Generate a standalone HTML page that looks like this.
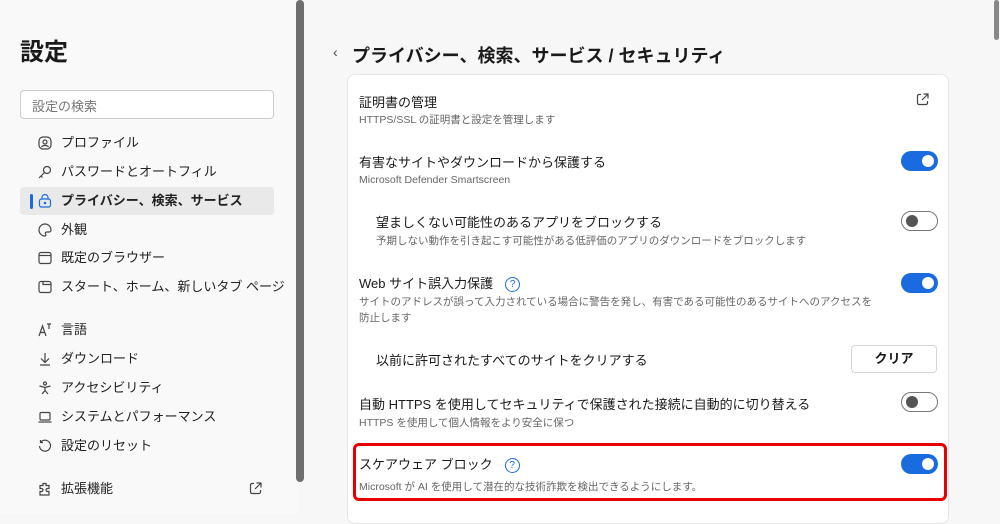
<!DOCTYPE html>
<html><head><meta charset="utf-8"><style>
*{margin:0;padding:0;box-sizing:border-box}
body{width:1000px;height:514px;overflow:hidden;background:#f7f7f7;font-family:"Liberation Sans","Noto Sans CJK JP",sans-serif;color:#1a1a1a;position:relative}
.side{position:absolute;left:0;top:0;width:297px;height:514px;background:#f9f9f9}
.sb{position:absolute;left:296px;top:0;width:8px;height:482px;background:#6e6e6e;border-radius:4px}
.sb2{position:absolute;left:994px;top:0;width:5px;height:40px;background:#888;border-radius:3px}
h1{position:absolute;left:20px;top:32px;font-size:24px;font-weight:bold}
.search{position:absolute;left:20px;top:90px;width:254px;height:29px;border:1px solid #ccc;border-radius:4px;background:#fff;font-size:13px;color:#777;padding:5px 11px}
.it{position:absolute;left:20px;width:254px;height:28px;font-size:13px;line-height:28px;padding-left:41px;color:#222;white-space:nowrap}
.it svg{position:absolute;left:18px;top:7px}
.act{background:#e9e9e9;border-radius:4px;font-weight:bold}
.act:before{content:"";position:absolute;left:10px;top:7px;width:3px;height:15px;background:#1a6be0;border-radius:2px}
.hd{position:absolute;left:352px;top:42px;font-size:18px;font-weight:bold;white-space:nowrap}
.back{position:absolute;left:333px;top:44px;font-size:14px;color:#444}
.card{position:absolute;left:347px;top:74px;width:602px;height:450px;background:#fff;border:1px solid #e5e5e5;border-radius:8px}
.t{position:absolute;font-size:13px;color:#1a1a1a;white-space:nowrap}
.s{position:absolute;font-size:10.5px;color:#666;white-space:nowrap}
.tg{position:absolute;left:901px;width:37px;height:20px;border-radius:10px;background:#1a6be0}
.tg:after{content:"";position:absolute;right:4px;top:4px;width:12px;height:12px;border-radius:6px;background:#fff}
.off{background:#fff;border:1px solid #777}
.off:after{left:4px;right:auto;top:3px;background:#555}
.q{display:inline-block;width:15px;height:15px;border:1.3px solid #1a6be0;border-radius:50%;color:#1a6be0;font-size:10px;text-align:center;line-height:13px;margin-left:12px;vertical-align:1px}
.btn{position:absolute;left:851px;top:345px;width:86px;height:28px;border:1px solid #d5d5d5;border-radius:4px;background:#fff;font-size:13px;font-weight:bold;text-align:center;line-height:26px}
.red{position:absolute;left:353px;top:443px;width:594px;height:58px;border:3px solid #e80000;border-radius:6px}
</style></head><body>
<div class="side">
<h1>設定</h1>
<div class="search">設定の検索</div>
<div class="it" style="top:129px"><svg width="14" height="14" viewBox="0 0 14 14" fill="none" stroke="#444" stroke-width="1.2"><rect x="1" y="1" width="12" height="12" rx="4"/><circle cx="7" cy="6" r="2"/><path d="M3.5 11c1-2 6-2 7 0"/></svg>プロファイル</div>
<div class="it" style="top:158px"><svg width="14" height="14" viewBox="0 0 14 14" fill="none" stroke="#444" stroke-width="1.2"><circle cx="9" cy="5" r="3.5"/><path d="M6.5 7.5L1 13M3 11l1.5 1.5"/></svg>パスワードとオートフィル</div>
<div class="it act" style="top:187px"><svg width="14" height="14" viewBox="0 0 14 14" fill="none" stroke="#1a6be0" stroke-width="1.2"><rect x="1.5" y="5" width="11" height="8" rx="2"/><path d="M4 5V3.5a3 3 0 0 1 6 0V5"/><circle cx="7" cy="9" r=".7"/></svg>プライバシー、検索、サービス</div>
<div class="it" style="top:216px"><svg width="14" height="14" viewBox="0 0 14 14" fill="none" stroke="#444" stroke-width="1.2"><path d="M7 1a6 6 0 1 0 0 12c1 0 1-1 .5-2s0-2 1.5-2h2a2 2 0 0 0 2-2A6 6 0 0 0 7 1z"/></svg>外観</div>
<div class="it" style="top:244px"><svg width="14" height="14" viewBox="0 0 14 14" fill="none" stroke="#444" stroke-width="1.2"><rect x="1" y="1.5" width="12" height="11" rx="2"/><path d="M1 4.5h12"/></svg>既定のブラウザー</div>
<div class="it" style="top:273px"><svg width="14" height="14" viewBox="0 0 14 14" fill="none" stroke="#444" stroke-width="1.2"><rect x="1" y="1.5" width="12" height="11" rx="2"/><path d="M5 1.5v3h8"/></svg>スタート、ホーム、新しいタブ ページ</div>
<div class="it" style="top:316px"><svg width="14" height="14" viewBox="0 0 14 14" fill="none" stroke="#444" stroke-width="1.2"><path d="M1 13L4.5 3 8 13M2.3 9.5h4.5M9 1h4M11 1v5"/></svg>言語</div>
<div class="it" style="top:345px"><svg width="14" height="14" viewBox="0 0 14 14" fill="none" stroke="#444" stroke-width="1.2"><path d="M7 1v9M3 6.5L7 10.5 11 6.5M2 13h10"/></svg>ダウンロード</div>
<div class="it" style="top:374px"><svg width="14" height="14" viewBox="0 0 14 14" fill="none" stroke="#444" stroke-width="1.2"><circle cx="7" cy="2.5" r="1.5"/><path d="M1.5 5l5.5 1.5L12.5 5M7 6.5v3L4 13M7 9.5l3 3.5"/></svg>アクセシビリティ</div>
<div class="it" style="top:403px"><svg width="14" height="14" viewBox="0 0 14 14" fill="none" stroke="#444" stroke-width="1.2"><rect x="2" y="2.5" width="10" height="7.5" rx="1"/><path d="M0.5 12h13"/></svg>システムとパフォーマンス</div>
<div class="it" style="top:432px"><svg width="14" height="14" viewBox="0 0 14 14" fill="none" stroke="#444" stroke-width="1.2"><path d="M2.5 3.5A5.5 5.5 0 1 1 1.5 7M2.5 1v2.5H5"/></svg>設定のリセット</div>
<div class="it" style="top:475px"><svg width="14" height="14" viewBox="0 0 14 14" fill="none" stroke="#444" stroke-width="1.2"><path d="M5 1.5h3v2h3v3h-1.5a1.5 1.5 0 0 0 0 3H11V13H2V9.5h1.5a1.5 1.5 0 0 0 0-3H2v-3h3z"/></svg>拡張機能<svg style="left:229px" width="13" height="13" viewBox="0 0 13 13" fill="none" stroke="#444" stroke-width="1.2"><path d="M5 1.5H3a1.5 1.5 0 0 0-1.5 1.5v7A1.5 1.5 0 0 0 3 11.5h7a1.5 1.5 0 0 0 1.5-1.5V8M7.5 1h4.5v4.5M12 1L6 7"/></svg></div>
</div>
<div class="sb"></div><div class="sb2"></div>
<div class="back">‹</div>
<div class="hd">プライバシー、検索、サービス / セキュリティ</div>
<div class="card"></div>
<div class="t" style="left:359px;top:92px">証明書の管理</div>
<div class="s" style="left:359px;top:112px">HTTPS/SSL の証明書と設定を管理します</div>
<svg style="position:absolute;left:916px;top:93px" width="13" height="13" viewBox="0 0 13 13" fill="none" stroke="#444" stroke-width="1.2"><path d="M5 1.5H3a1.5 1.5 0 0 0-1.5 1.5v7A1.5 1.5 0 0 0 3 11.5h7a1.5 1.5 0 0 0 1.5-1.5V8M7.5 1h4.5v4.5M12 1L6 7"/></svg>
<div class="t" style="left:359px;top:152px">有害なサイトやダウンロードから保護する</div>
<div class="s" style="left:359px;top:174px">Microsoft Defender Smartscreen</div>
<div class="tg" style="top:151px"></div>
<div class="t" style="left:376px;top:212px">望ましくない可能性のあるアプリをブロックする</div>
<div class="s" style="left:376px;top:233px">予期しない動作を引き起こす可能性がある低評価のアプリのダウンロードをブロックします</div>
<div class="tg off" style="top:211px"></div>
<div class="t" style="left:359px;top:273px">Web サイト誤入力保護<span class="q">?</span></div>
<div class="s" style="left:359px;top:295px;line-height:15.5px">サイトのアドレスが誤って入力されている場合に警告を発し、有害である可能性のあるサイトへのアクセスを<br>防止します</div>
<div class="tg" style="top:273px"></div>
<div class="t" style="left:376px;top:350px">以前に許可されたすべてのサイトをクリアする</div>
<div class="btn">クリア</div>
<div class="t" style="left:359px;top:394px">自動 HTTPS を使用してセキュリティで保護された接続に自動的に切り替える</div>
<div class="s" style="left:359px;top:415px">HTTPS を使用して個人情報をより安全に保つ</div>
<div class="tg off" style="top:392px"></div>
<div class="t" style="left:359px;top:454px">スケアウェア ブロック<span class="q">?</span></div>
<div class="s" style="left:359px;top:479px">Microsoft が AI を使用して潜在的な技術詐欺を検出できるようにします。</div>
<div class="tg" style="top:454px"></div>
<div class="red"></div>
</body></html>
